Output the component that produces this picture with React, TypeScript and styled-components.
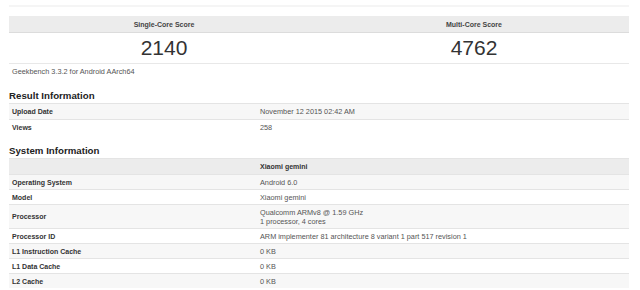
import React from "react";
import styled, { createGlobalStyle } from "styled-components";

const Global = createGlobalStyle`
  html, body { margin: 0; padding: 0; background: #fff; }
  body { font-family: "Liberation Sans", Arial, sans-serif; color: #333; }
`;

const Page = styled.div`
  width: 620px;
  margin-left: 9px;
  padding-top: 5px;
`;

const TopRule = styled.div`
  height: 2px;
  background: #f5f5f5;
  margin-bottom: 9px;
`;

const ScoreTable = styled.div`
  display: grid;
  grid-template-columns: 1fr 1fr;
`;

const ScoreHead = styled.div`
  height: 16px;
  background: #ececec;
  border-bottom: 1px solid #dcdcdc;
  display: flex;
  align-items: center;
  justify-content: center;
  font-size: 7px;
  font-weight: bold;
  color: #444;
`;

const ScoreValue = styled.div`
  height: 30px;
  border-bottom: 1px solid #e8e8e8;
  display: flex;
  align-items: center;
  justify-content: center;
  font-size: 21px;
  color: #333;
`;

const Note = styled.div`
  font-size: 7.3px;
  line-height: 8px;
  color: #555;
  padding: 4px 3px 0;
`;

const Heading = styled.h2<{ $top: number }>`
  margin: ${(p) => p.$top}px 0 0;
  font-size: 9.7px;
  line-height: 12px;
  font-weight: bold;
  color: #222;
`;

const Table = styled.table`
  width: 100%;
  border-collapse: collapse;
  table-layout: fixed;
  margin-top: 1px;
`;

const Row = styled.tr<{ $striped?: boolean; $head?: boolean }>`
  background: ${(p) => (p.$head ? "#ececec" : p.$striped ? "#f7f7f7" : "#fff")};
  border-top: 1px solid #e4e4e4;
`;

const Label = styled.td<{ $h: number }>`
  width: 242px;
  height: ${(p) => p.$h}px;
  padding: 0 3px;
  font-size: 7px;
  line-height: 9px;
  font-weight: bold;
  color: #333;
  vertical-align: middle;
`;

const Value = styled.td<{ $bold?: boolean }>`
  padding: 0 3px;
  font-size: ${(p) => (p.$bold ? "7px" : "7.3px")};
  line-height: 9px;
  font-weight: ${(p) => (p.$bold ? "bold" : "normal")};
  color: ${(p) => (p.$bold ? "#333" : "#555")};
  vertical-align: middle;
`;

type Item = { label: string; value: React.ReactNode; h?: number };

const resultRows: Item[] = [
  { label: "Upload Date", value: "November 12 2015 02:42 AM", h: 15 },
  { label: "Views", value: "258", h: 15 },
];

const systemRows: Item[] = [
  { label: "Operating System", value: "Android 6.0" },
  { label: "Model", value: "Xiaomi gemini" },
  {
    label: "Processor",
    value: (
      <>
        Qualcomm ARMv8 @ 1.59 GHz
        <br />1 processor, 4 cores
      </>
    ),
    h: 23,
  },
  {
    label: "Processor ID",
    value: "ARM implementer 81 architecture 8 variant 1 part 517 revision 1",
  },
  { label: "L1 Instruction Cache", value: "0 KB" },
  { label: "L1 Data Cache", value: "0 KB" },
  { label: "L2 Cache", value: "0 KB" },
];

function InfoRows({ rows }: { rows: Item[] }) {
  return (
    <>
      {rows.map((r, i) => (
        <Row key={r.label} $striped={i % 2 === 0}>
          <Label $h={r.h ?? 14}>{r.label}</Label>
          <Value>{r.value}</Value>
        </Row>
      ))}
    </>
  );
}

export default function App() {
  return (
    <>
      <Global />
      <Page>
        <TopRule />
        <ScoreTable>
          <ScoreHead>Single-Core Score</ScoreHead>
          <ScoreHead>Multi-Core Score</ScoreHead>
          <ScoreValue>2140</ScoreValue>
          <ScoreValue>4762</ScoreValue>
        </ScoreTable>
        <Note>Geekbench 3.3.2 for Android AArch64</Note>
        <Heading $top={14}>Result Information</Heading>
        <Table>
          <tbody>
            <InfoRows rows={resultRows} />
          </tbody>
        </Table>
        <Heading $top={10}>System Information</Heading>
        <Table>
          <tbody>
            <Row $head>
              <Label $h={15}></Label>
              <Value $bold>Xiaomi gemini</Value>
            </Row>
            <InfoRows rows={systemRows} />
          </tbody>
        </Table>
      </Page>
    </>
  );
}
